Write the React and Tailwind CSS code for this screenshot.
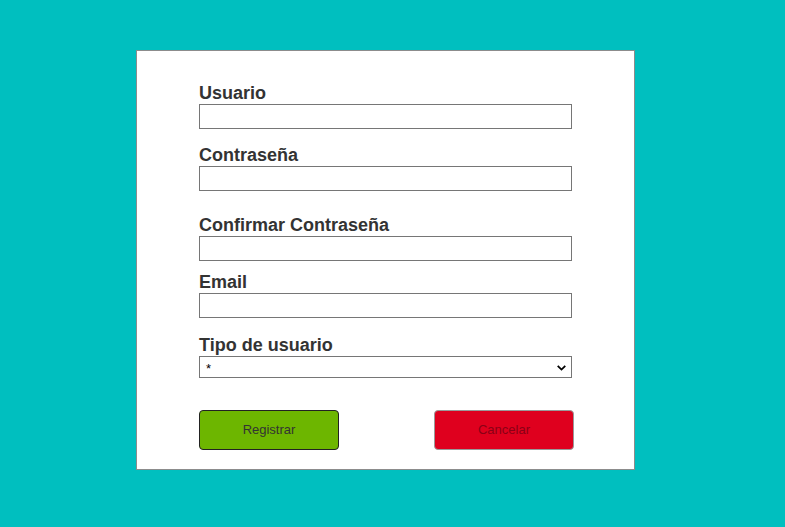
export default function App() {
  const labelCls = "block text-[18px] font-bold leading-[21px] text-[#333]";
  const inputCls = "block w-[373px] h-[25px] border border-[#767676] bg-white";

  return (
    <div className="min-h-screen bg-[#00bfbf] pt-[50px] pl-[136px]" style={{ fontFamily: '"Liberation Sans", Arial, sans-serif' }}>
      <div className="w-[499px] h-[420px] border border-[#8c8c8c] bg-white pl-[62px] pt-[32px]">
        <label className={labelCls}>Usuario</label>
        <input type="text" className={inputCls} />

        <label className={`${labelCls} mt-[16px]`}>Contraseña</label>
        <input type="password" className={inputCls} />

        <label className={`${labelCls} mt-[24px]`}>Confirmar Contraseña</label>
        <input type="password" className={inputCls} />

        <label className={`${labelCls} mt-[11px]`}>Email</label>
        <input type="email" className={inputCls} />

        <label className={`${labelCls} mt-[17px]`}>Tipo de usuario</label>
        <div className="relative w-[373px] h-[22px] border border-[#767676] bg-white">
          <span className="absolute left-[6px] top-[2px] text-[13px] text-black">*</span>
          <svg className="absolute right-[4px] top-[5px]" width="11" height="11" viewBox="0 0 16 16">
            <path d="M2.5 5.5 L8 11 L13.5 5.5" fill="none" stroke="#000" strokeWidth="2.6" />
          </svg>
        </div>

        <div className="mt-[32px] flex w-[375px] justify-between">
          <button className="w-[140px] h-[40px] rounded-[4px] border border-[#222] bg-[#6db600] text-[13px] text-[#333]">
            Registrar
          </button>
          <button className="w-[140px] h-[40px] rounded-[4px] border border-[#9a9a9a] bg-[#df001e] text-[13px] text-[#8a0015]">
            Cancelar
          </button>
        </div>
      </div>
    </div>
  );
}
